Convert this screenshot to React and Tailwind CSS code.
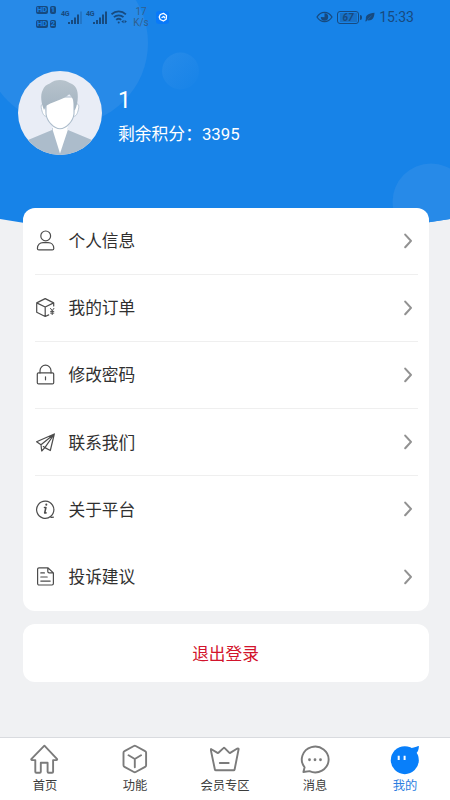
import React, { useState } from "react";
import clsx from "clsx";

const strokeProps = {
  fill: "none",
  stroke: "currentColor",
  strokeLinecap: "round",
  strokeLinejoin: "round",
};

const menuItems = [
  {
    label: "个人信息",
    icon: (
      <>
        <circle cx="10.7" cy="5.9" r="4.9" />
        <path d="M2.4 18.400c0-3.700 2.500-5.800 5.600-5.800h5.200c3.100 0 5.600 2.100 5.600 5.800 0 .9-.6 1.500-1.500 1.500H3.900c-.9 0-1.500-.6-1.500-1.500z" />
      </>
    ),
  },
  {
    label: "我的订单",
    icon: (
      <>
        <path d="M18.700 9V5.900L10.200 1.600 1.700 5.900v9.400l8.500 4.200 3.500-1.600M1.700 5.900l8.500 4.100 8.500-4.100M10.200 10v9.500" />
        <path d="M15.500 11.400l1.700 2.200 1.700-2.200M17.200 13.600v4M15.600 14.400h3.200M15.600 16.100h3.200" strokeWidth="1" />
      </>
    ),
  },
  {
    label: "修改密码",
    icon: (
      <>
        <rect x="2.300" y="8.900" width="16.400" height="11" rx="1.200" />
        <path d="M5 8.900V6.700a5.500 5.500 0 0 1 11 0v2.200M10.500 12.800v3" />
      </>
    ),
  },
  {
    label: "联系我们",
    icon: (
      <path d="M19.300 2L1.600 9.800l4.400 2.900.7 6.300 3.200-3.400 5.400 2.900zM19.300 2L6 12.700M19.300 2l-9.400 13.600M9.900 15.600l-1.600-1" />
    ),
  },
  {
    label: "关于平台",
    icon: (
      <>
        <path d="M15.800 17.300a8.600 8.600 0 1 1 2.300-3.100c-.6 1.500-1.300 2.300-2.300 3.100-.7.700-.2 1.200 2.600.9" />
        <path d="M9.500 8.500h1.400l-1.200 5.400h1.300" strokeWidth="1.600" />
        <path d="M11.300 5.600v.1" strokeWidth="2" />
      </>
    ),
  },
  {
    label: "投诉建议",
    icon: (
      <>
        <path d="M12.800 1.800H4a1.400 1.400 0 0 0-1.400 1.400v14.400A1.400 1.400 0 0 0 4 19h13a1.400 1.400 0 0 0 1.400-1.400V6.900zM12.800 1.800v3.700a1.400 1.400 0 0 0 1.400 1.400h4.200" />
        <path d="M5.800 6.900h3.600M5.800 11h6.400M5.800 15.100h9.400" />
      </>
    ),
  },
];

const tabs = [
  {
    label: "首页",
    icon: (
      <path d="M14.400 1.700L1.500 14.900c-.5.600-.2 1.200.5 1.200h3.300v11.600c0 .6.400 1 1 1h3.500c.6 0 1-.4 1-1V18.700h6.800v9c0 .6.400 1 1 1h3.500c.6 0 1-.4 1-1V16.100h3.300c.7 0 1-.6.500-1.200z" />
    ),
  },
  {
    label: "功能",
    icon: (
      <path d="M13.900 2a2 2 0 0 1 1.800 0l9.400 5.100c.6.300 1 .9 1 1.600v12.600c0 .7-.4 1.300-1 1.600l-9.400 5.100a2 2 0 0 1-1.800 0l-9.400-5.100a1.900 1.900 0 0 1-1-1.600V8.700c0-.7.400-1.300 1-1.600zM8.600 11.300l6.200 3.700 6.200-3.700M14.800 15v8.200" />
    ),
  },
  {
    label: "会员专区",
    icon: (
      <path d="M1.400 5.200l6.100 3.700c.4.200.8.100 1-.2l4.900-4.600c.4-.4.900-.4 1.300 0l4.500 4.600c.3.300.7.400 1 .2l7.100-4.400c.8-.4 1.500 0 1.300.8l-4 20.200c-.1.500-.5.800-1 .8H5.900c-.5 0-.9-.3-1-.8L.8 5.900c-.1-.7.200-1 .6-.7zM9.800 19h8.900" />
    ),
  },
  {
    label: "消息",
    icon: (
      <>
        <path d="M3.400 28l1.200-4.700a13.400 12.900 0 1 1 4.900 3.800z" />
        <path d="M9.500 15.700v.1M15 15.700v.1M20.500 15.700v.1" strokeWidth="2.800" />
      </>
    ),
  },
  {
    label: "我的",
    icon: (
      <g stroke="none">
        <circle cx="14.800" cy="16.200" r="14" fill="#087ffa" />
        <path d="M18.300 3.500c3.300.9 6.500.1 9.900-1.500.5-.2.800.1.700.6-.2 2.900-.9 4.700-2.300 6.500z" fill="#087ffa" />
        <path d="M7.700 11.800h2v4.200h-2zM13.600 11.800h2v4.200h-2z" fill="white" />
      </g>
    ),
  },
];

const HdBadge = ({ sim }) => (
  <div className="flex gap-[2px] text-[7.500px] leading-[8px] font-bold text-[#1783e8]">
    <span className="h-2 w-3 rounded-[2px] bg-[#174a7f] text-center">HD</span>
    <span className="h-2 w-[6px] rounded-[2px] bg-[#174a7f] text-center">{sim}</span>
  </div>
);

const Signal = ({ weak }) => (
  <div className="relative h-4 w-[25px]">
    <span className="absolute left-0 top-[1px] text-[7px] leading-[8px] font-bold tracking-tighter">4G</span>
    <svg viewBox="0 0 25 16" className="h-4 w-[25px]" fill="currentColor">
      <rect x="7" y="13" width="2" height="2" />
      <rect x="10" y="11" width="2" height="4" />
      <rect x="13" y="8.500" width="2" height="6.500" />
      <rect x="16" y="5.500" width="2" height="9.500" />
      <rect x="19" y="2.500" width="2" height="12.500" opacity={weak ? 0.3 : 1} />
    </svg>
  </div>
);

const StatusBar = () => (
  <div className="flex h-[34px] items-center pl-9 pr-9 text-[#174a7f]">
    <div className="flex flex-col gap-[6px]">
      <HdBadge sim="1" />
      <HdBadge sim="2" />
    </div>
    <div className="ml-[5px] flex">
      <Signal weak />
      <Signal />
    </div>
    <svg viewBox="0 0 17 14" className="h-[14px] w-[17px]" {...strokeProps} strokeWidth="1.800" strokeLinecap="butt">
      <path d="M.5 4.300a10.500 10.500 0 0 1 14.400 0M2.900 7.200a7 7 0 0 1 9.600 0M5.200 9.900a3.700 3.700 0 0 1 5 0" />
      <circle cx="7.700" cy="12.400" r="1" fill="currentColor" stroke="none" />
      <path d="M10.300 11.600l2.300-1.700v3.400zM15.900 11.600l-2.300-1.700v3.400z" fill="currentColor" stroke="none" />
    </svg>
    <div className="ml-[3px] w-5 text-center text-[10px] leading-[11px] text-[#315f8e]">
      <div>17</div>
      <div>K/s</div>
    </div>
    <div className="ml-[5px] flex size-[13px] items-center justify-center rounded-[3px] bg-[#0879fa]">
      <svg viewBox="0 0 12 12" className="size-3" {...strokeProps} stroke="white">
        <path d="M3.300 3.500L6.500 2.300l3 2.200-.3 3.700-2.800 1.800-3.200-1.500-1-2.500z" strokeWidth="1.300" />
        <path d="M5 6.500l1.700-1 1 1.200" strokeWidth="1.300" />
      </svg>
    </div>
    <svg viewBox="0 0 17 12" className="ml-auto h-3 w-[17px]" {...strokeProps} strokeWidth="1.300">
      <path d="M1 6c3.900-6.300 11.100-6.300 15 0-3.900 6.200-11.100 6.200-15 0z" />
      <path d="M8.500 2.300a3.700 3.700 0 1 1-3.700 3.700l3.700.3z" fill="currentColor" stroke="none" />
    </svg>
    <div className="ml-1 flex h-[13px] w-[22px] items-center justify-center rounded-[3px] border-[1.500px] border-[#174a7f]">
      <span className="h-[9px] w-[17px] bg-[#174a7f]/30 text-center text-[10px] leading-[9px] font-bold italic">67</span>
    </div>
    <span className="ml-px h-[5px] w-[2px] rounded-r bg-[#174a7f]" />
    <svg viewBox="0 0 10 10" className="ml-[3px] size-[10px]" fill="currentColor">
      <path d="M9.500.7C3.500 1.200.3 3.300.9 7L.3 9.300l.8.200 1-1.200c5 .8 7.200-2.300 7.400-7.600z" />
      <path d="M2.300 7.800L6.500 3.800" stroke="#1783e8" strokeWidth=".4" />
    </svg>
    <span className="ml-1 text-[14px] leading-4">15:33</span>
  </div>
);

const HeaderBackground = () => (
  <svg viewBox="0 0 450 240" className="absolute inset-x-0 top-0 -z-10 h-60 w-[450px]">
    <defs>
      <clipPath id="headerShape">
        <path d="M0 0h450v219Q225 258 0 219z" />
      </clipPath>
      <linearGradient id="bubble" x1="0" y1="0" x2="1" y2="1">
        <stop offset="0" stopColor="#278be9" />
        <stop offset="1" stopColor="#1783e8" />
      </linearGradient>
    </defs>
    <g clipPath="url(#headerShape)">
      <path d="M0 0h450v240H0z" fill="#1783e8" />
      <circle cx="66" cy="43" r="82" fill="#278ae8" />
      <circle cx="180.500" cy="71" r="18.500" fill="url(#bubble)" />
      <circle cx="431" cy="202" r="38.500" fill="#278ae8" />
    </g>
  </svg>
);

const Avatar = () => (
  <svg viewBox="0 0 84 84" className="size-[84px] rounded-full bg-[#e9edf6]">
    <defs>
      <linearGradient id="hair" x1="0" y1="0" x2="0" y2="1">
        <stop offset="0" stopColor="#b7c3cc" />
        <stop offset="1" stopColor="#a4b4c1" />
      </linearGradient>
    </defs>
    <path d="M34 57v2L10 69v15h64V69L50 59v-2z" fill="#acbccb" />
    <path d="M34.700 54h14.800l.3 5L42 82.500 34.700 59z" fill="white" />
    <path d="M27 33c-4-1-4.500 2-3 7 1 4 3 6 5 5zM57 33c4-1 4.500 2 3 7-1 4-3 6-5 5z" fill="white" stroke="#acbccb" strokeWidth=".8" />
    <path d="M28 26h28v17c-1 7.500-8 14.800-14 14.800S29 50.500 28 43z" fill="white" stroke="#acbccb" strokeWidth="1.100" />
    <path d="M26 39c-2.800-7-4-15-1.200-20 1-3.500 4-5.500 7-6.500 5.500-4.500 14-4.500 20-.5 6.500 2 8.300 8 8 14 0 4.500-1 9-2.800 13h-.8c.3-7-.8-12-5-15.800-3.500 3.500-8 4.800-13.200 7-4.500 1.800-7.500 3-9.800 4.500z" fill="url(#hair)" />
  </svg>
);

const MenuRow = ({ item, divided }) => (
  <button
    className={clsx(
      "flex h-[67.200px] w-full items-center border-b",
      divided ? "border-[#efefef]" : "border-transparent"
    )}
  >
    <svg viewBox="0 0 21 21" className="size-[21px] text-[#4c4c4c]" {...strokeProps} strokeWidth="1.200">
      {item.icon}
    </svg>
    <span className="ml-[13px] pt-[3px] text-[16.700px] leading-6 text-[#303030]">{item.label}</span>
    <svg viewBox="0 0 10 16" className="ml-auto mr-[5px] h-4 w-[10px] text-[#929292]" {...strokeProps} strokeWidth="2.100">
      <path d="M2.200 1.600L8 7.900l-5.800 6.300" />
    </svg>
  </button>
);

const App = () => {
  const [activeTab, setActiveTab] = useState("我的");

  return (
    <div className="relative isolate flex h-[800px] w-[450px] flex-col overflow-hidden bg-[#f0f1f3] font-[Roboto,'Noto_Sans_CJK_SC',sans-serif]">
      <HeaderBackground />
      <StatusBar />

      {/* Profile */}
      <div className="flex h-[173.500px] items-start pl-[18px] pt-[37px] text-white">
        <Avatar />
        <div className="ml-4 pt-[17px]">
          <div className="text-[23px] leading-[26px]">1</div>
          <div className="mt-[8px] text-[16.800px] leading-6">剩余积分：3395</div>
        </div>
      </div>

      {/* Menu */}
      <div className="ml-[22.500px] mr-[21.500px] rounded-[12px] bg-white pl-3 pr-[11px]">
        {menuItems.map((item, i) => (
          <MenuRow key={item.label} item={item} divided={i < 4} />
        ))}
      </div>

      <button className="ml-[22.500px] mr-[21.500px] mt-[13.500px] h-[58px] rounded-[12px] bg-white pt-[3px] text-[16.700px] text-[#d2142c]">
        退出登录
      </button>

      {/* Tab bar */}
      <div className="mt-auto grid h-[63px] grid-cols-5 border-t border-[#d9dbdf] bg-white">
        {tabs.map((tab) => (
          <button
            key={tab.label}
            onClick={() => setActiveTab(tab.label)}
            className={clsx(
              "flex flex-col items-center pt-[6px]",
              activeTab === tab.label ? "text-[#2c7de0]" : "text-[#3c3c3c]"
            )}
          >
            <svg viewBox="0 0 30 32" className="h-8 w-[30px]" {...strokeProps} stroke="#7b7b7b" strokeWidth="1.900">
              {tab.icon}
            </svg>
            <span className="mt-px text-[12.300px] leading-[19px]">{tab.label}</span>
          </button>
        ))}
      </div>
    </div>
  );
};

export default App;
